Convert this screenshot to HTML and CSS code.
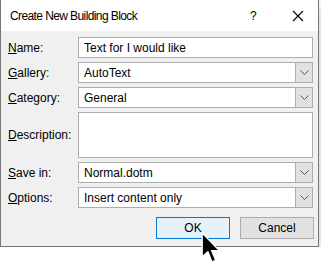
FILE: index.html
```html
<!DOCTYPE html>
<html lang="en">
<head>
    <meta charset="UTF-8">
    <title>Create New Building Block</title>
    <link rel="stylesheet" href="styles.css">
</head>
<body>

    <div class="dialog">
        <!-- Barra de titulo -->
        <div class="titlebar">
            <span class="title">Create New Building Block</span>
            <span class="help">?</span>
            <svg class="close" width="12" height="12" viewBox="0 0 12 12">
                <path d="M1 1 L11 11 M11 1 L1 11" stroke="#000" stroke-width="1.1" fill="none"/>
            </svg>
        </div>

        <!-- Formulario -->
        <div class="form">
            <label><u>N</u>ame:</label>
            <div class="field">Text for I would like</div>

            <label><u>G</u>allery:</label>
            <div class="field combo">AutoText<span class="arrow"><svg width="9" height="5" viewBox="0 0 9 5"><path d="M0.5 0.5 L4.5 4.5 L8.5 0.5" stroke="#555" fill="none"/></svg></span></div>

            <label><u>C</u>ategory:</label>
            <div class="field combo">General<span class="arrow"><svg width="9" height="5" viewBox="0 0 9 5"><path d="M0.5 0.5 L4.5 4.5 L8.5 0.5" stroke="#555" fill="none"/></svg></span></div>

            <label class="tall"><u>D</u>escription:</label>
            <div class="field tall"></div>

            <label><u>S</u>ave in:</label>
            <div class="field combo">Normal.dotm<span class="arrow"><svg width="9" height="5" viewBox="0 0 9 5"><path d="M0.5 0.5 L4.5 4.5 L8.5 0.5" stroke="#555" fill="none"/></svg></span></div>

            <label><u>O</u>ptions:</label>
            <div class="field combo">Insert content only<span class="arrow"><svg width="9" height="5" viewBox="0 0 9 5"><path d="M0.5 0.5 L4.5 4.5 L8.5 0.5" stroke="#555" fill="none"/></svg></span></div>
        </div>

        <div class="buttons">
            <button class="btn default">OK</button>
            <button class="btn">Cancel</button>
        </div>
    </div>

    <!-- Puntero del raton -->
    <svg class="cursor" width="21" height="33" viewBox="0 0 20 32">
        <path d="M1 1 L1 24 L6.5 19 L10.5 29 L14 27.5 L10 18 L17.5 18 Z" fill="#000" stroke="#fff" stroke-width="1.2" stroke-linejoin="round"/>
    </svg>

</body>
</html>
```

FILE: styles.css
```css
/* Estilo general */
body {
    margin: 0;
    background-color: #fff;
    font-family: "Liberation Sans", Arial, sans-serif;
    font-size: 12px;
    color: #000;
}
.dialog {
    width: 317px;
    background-color: #f0f0f0;
    border: 1px solid #777;
    border-top: none;
    box-shadow: 0 5px 12px rgba(0, 0, 0, 0.25);
}
.titlebar {
    height: 31px;
    background-color: #fff;
    display: flex;
    align-items: center;
    padding-left: 9px;
}
.title {
    flex: 1;
    font-size: 12px;
    letter-spacing: -0.6px;
}
.help {
    width: 10px;
    margin-right: 32px;
    font-size: 12px;
}
.close {
    margin-right: 14px;
}
.form {
    display: grid;
    grid-template-columns: 70px 235px;
    grid-auto-rows: 21px;
    row-gap: 4px;
    padding: 6px 4px 0 7px;
}
.form label {
    display: flex;
    align-items: center;
}
.field {
    background-color: #fff;
    border: 1px solid #adadad;
    display: flex;
    align-items: center;
    padding-left: 5px;
    box-sizing: border-box;
}
.tall {
    grid-row: span 2;
}
.combo .arrow {
    margin-left: auto;
    width: 16px;
    height: 100%;
    background-color: #e1e1e1;
    border-left: 1px solid #adadad;
    display: flex;
    align-items: center;
    justify-content: center;
}
.buttons {
    display: flex;
    justify-content: flex-end;
    gap: 10px;
    padding: 9px 4px 7px 0;
}
.btn {
    width: 74px;
    height: 22px;
    font-family: inherit;
    font-size: 12px;
    background-color: #e1e1e1;
    border: 1px solid #adadad;
    padding: 0;
    color: #000;
}
.btn.default {
    background-color: #e5f1fb;
    border-color: #0078d7;
}
.cursor {
    position: absolute;
    left: 201px;
    top: 232px;
}
```
